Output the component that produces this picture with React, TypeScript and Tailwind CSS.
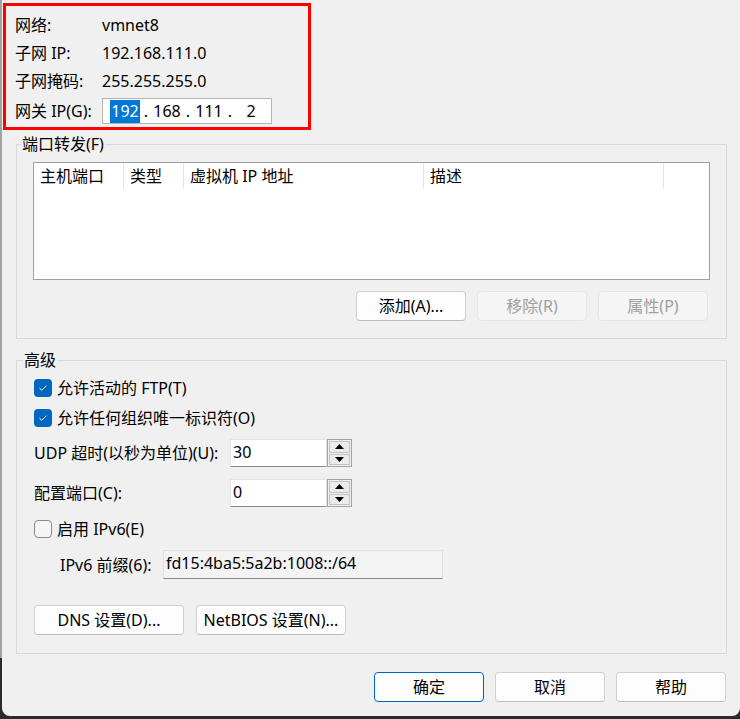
import type { ReactNode } from "react";

type BtnProps = {
  children: ReactNode;
  className?: string;
  disabled?: boolean;
  primary?: boolean;
};

const Btn = ({ children, className = "w-[110px]", disabled, primary }: BtnProps) => (
  <div
    className={`h-[30px] ${className} flex items-center justify-center rounded-[4px] border ${
      disabled
        ? "border-[#e5e5e5] bg-[#f5f5f5] text-[#a0a0a0]"
        : primary
        ? "border-[#0067c0] bg-[#fdfdfd] text-black"
        : "border-[#d0d0d0] border-b-[#bcbcbc] bg-[#fdfdfd] text-black"
    }`}
  >
    {children}
  </div>
);

const Check = ({ checked }: { checked?: boolean }) =>
  checked ? (
    <div className="w-[18px] h-[18px] rounded-[4px] bg-[#0067c0] flex items-center justify-center">
      <svg width="10" height="8" viewBox="0 0 10 8">
        <path d="M1.5 4.2 L3.8 6.3 L8.5 1.6" fill="none" stroke="white" strokeWidth="1" />
      </svg>
    </div>
  ) : (
    <div className="w-[18px] h-[18px] rounded-[4px] border border-[#8a8a8a] bg-[#f5f5f5]" />
  );

const Arrow = ({ up }: { up?: boolean }) => (
  <svg width="9" height="5" viewBox="0 0 9 5">
    <polygon points={up ? "0,5 9,5 4.5,0" : "0,0 9,0 4.5,5"} fill="black" />
  </svg>
);

const Spin = ({ value }: { value: string }) => (
  <div className="flex h-[28px]">
    <div className="w-[97px] h-[28px] bg-white border border-[#e3e3e3] border-b-[#8d8d8d] pl-[2px] leading-[24px]">
      {value}
    </div>
    <div className="w-[25px] h-[28px] border border-[#a3a3a3] bg-[#f0f0f0] p-[1px] flex flex-col gap-[1px]">
      <div className="flex-1 border border-[#c2c2c2] bg-[#ebebeb] flex items-center justify-center">
        <Arrow up />
      </div>
      <div className="flex-1 border border-[#c2c2c2] bg-[#ebebeb] flex items-center justify-center">
        <Arrow />
      </div>
    </div>
  </div>
);

const cols = [
  { label: "主机端口", w: "w-[90px]" },
  { label: "类型", w: "w-[60px]" },
  { label: "虚拟机 IP 地址", w: "w-[240px]" },
  { label: "描述", w: "w-[240px]" },
];

export default function App() {
  return (
    <div className="w-[740px] h-[719px] bg-[#2b2b2b] flex overflow-hidden text-[16px] text-black font-['Noto_Sans','Noto_Sans_CJK_SC',sans-serif]">
      <div className="w-[2px] h-[658px] bg-[#a3a3a3]" />
      <div className="w-[738px] h-[716px] bg-[#f0f0f0] rounded-bl-[8px] rounded-br-[8px] flex flex-col">
        {/* network info, marked in red */}
        <div className="ml-[1px] mt-[3px] w-[308px] h-[127px] border-[3px] border-[#ff0000] pl-[9px] pt-[5px] flex flex-col">
          <div className="h-[28px] flex items-center">
            <span className="w-[87px]">网络:</span>
            <span>vmnet8</span>
          </div>
          <div className="h-[28px] flex items-center">
            <span className="w-[87px]">子网 IP:</span>
            <span>192.168.111.0</span>
          </div>
          <div className="h-[28px] flex items-center">
            <span className="w-[87px]">子网掩码:</span>
            <span>255.255.255.0</span>
          </div>
          <div className="mt-[2px] h-[28px] flex items-center">
            <span className="w-[87px]">网关 IP(G):</span>
            <div className="w-[170px] h-[26px] bg-white border border-[#b4b4b4] pl-[4px] flex items-center">
              <span className="w-[36px] flex justify-center">
                <span className="bg-[#0078d7] text-white px-[1px] leading-[23px]">192</span>
              </span>
              <span className="w-[6px] text-center">.</span>
              <span className="w-[36px] text-center">168</span>
              <span className="w-[6px] text-center">.</span>
              <span className="w-[36px] text-center">111</span>
              <span className="w-[6px] text-center">.</span>
              <span className="w-[36px] text-center">2</span>
            </div>
          </div>
        </div>

        {/* port forwarding */}
        <fieldset className="ml-[14px] mt-[4px] w-[711px] border border-[#d9d9d9]">
          <legend className="ml-[4px] px-[1px] leading-[20px]">端口转发(F)</legend>
          <div className="px-[16px] pt-[8px] pb-[17px] flex flex-col">
            <div className="h-[118px] bg-white border border-[#a0a0a0]">
              <div className="flex h-[26px]">
                {cols.map((c) => (
                  <div
                    key={c.label}
                    className={`${c.w} h-[26px] border-r border-[#e5e5e5] pl-[6px] flex items-center`}
                  >
                    {c.label}
                  </div>
                ))}
              </div>
            </div>
            <div className="mt-[11px] mr-[2px] flex justify-end gap-[11px]">
              <Btn>添加(A)...</Btn>
              <Btn disabled>移除(R)</Btn>
              <Btn disabled>属性(P)</Btn>
            </div>
          </div>
        </fieldset>

        {/* advanced */}
        <fieldset className="ml-[14px] mt-[11px] w-[711px] border border-[#d9d9d9]">
          <legend className="ml-[6px] px-[1px] leading-[20px]">高级</legend>
          <div className="pl-[17px] pr-[16px] pt-[3px] pb-[18px] flex flex-col">
            <div className="h-[30px] flex items-center gap-[5px]">
              <Check checked />
              <span>允许活动的 FTP(T)</span>
            </div>
            <div className="h-[30px] flex items-center gap-[5px]">
              <Check checked />
              <span>允许任何组织唯一标识符(O)</span>
            </div>
            <div className="mt-[6px] h-[28px] flex items-center">
              <span className="w-[196px]">UDP 超时(以秒为单位)(U):</span>
              <Spin value="30" />
            </div>
            <div className="mt-[12px] h-[28px] flex items-center">
              <span className="w-[196px]">配置端口(C):</span>
              <Spin value="0" />
            </div>
            <div className="mt-[7px] h-[30px] flex items-center gap-[5px]">
              <Check />
              <span>启用 IPv6(E)</span>
            </div>
            <div className="mt-[6px] h-[29px] flex items-center pl-[26px]">
              <span className="w-[103px]">IPv6 前缀(6):</span>
              <div className="w-[280px] h-[29px] bg-[#f3f3f3] border border-[#e0e0e0] border-b-[#8a8a8a] pl-[2px] leading-[24px]">
                fd15:4ba5:5a2b:1008::/64
              </div>
            </div>
            <div className="mt-[26px] flex gap-[12px]">
              <Btn className="w-[150px]">DNS 设置(D)...</Btn>
              <Btn className="w-[150px]">NetBIOS 设置(N)...</Btn>
            </div>
          </div>
        </fieldset>

        {/* dialog buttons */}
        <div className="mt-[18px] w-[724px] flex justify-end gap-[11px]">
          <Btn primary>确定</Btn>
          <Btn>取消</Btn>
          <Btn>帮助</Btn>
        </div>
      </div>
    </div>
  );
}
